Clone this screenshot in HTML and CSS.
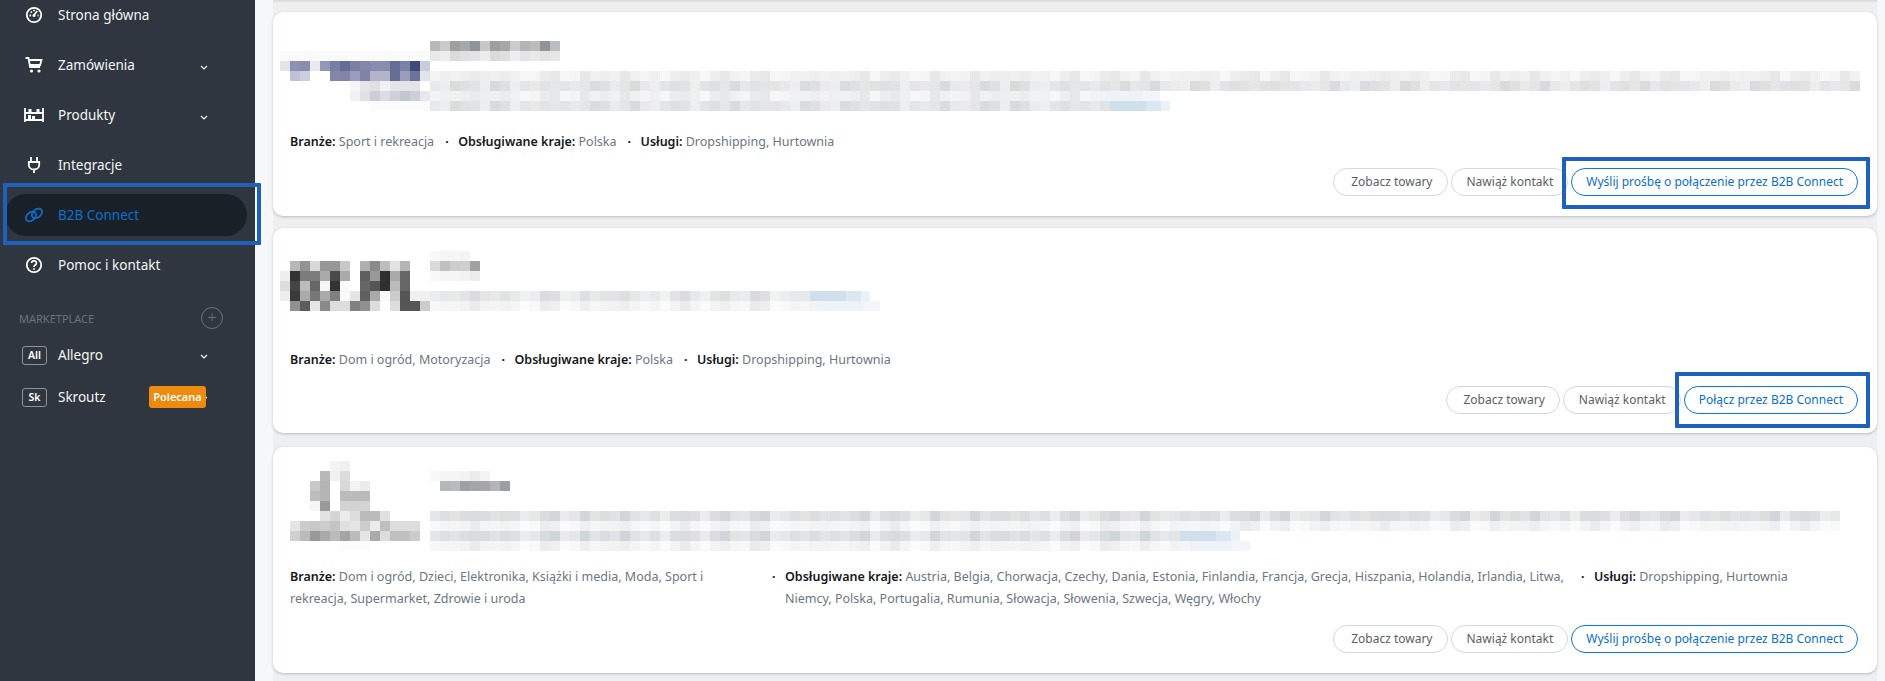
FILE: index.html
```html
<!DOCTYPE html>
<html lang="pl">
<head>
<meta charset="utf-8">
<title>B2B Connect</title>
<link rel="stylesheet" href="styles.css">
</head>
<body>
<div class="app">
  <aside class="sidebar">
    <nav class="menu">
      <a class="item"><svg class="ico" viewBox="0 0 18 18"><circle cx="9" cy="9" r="7.2"/><path d="M9 9l3.2-4M4.5 9.5h1.6M5.8 5.6l1 1M9 3.8v1.4M12.6 9.5h1"/><circle class="dot" cx="9" cy="9.4" r="1.5"/></svg><span class="label">Strona główna</span></a>
      <a class="item"><svg class="ico" viewBox="0 0 18 18"><path d="M0.5 2h3l1.6 9h10M4 4h12.5l-1.4 5H5"/><circle class="dot" cx="6.5" cy="15" r="1.6"/><circle class="dot" cx="14" cy="15" r="1.6"/></svg><span class="label">Zamówienia</span><svg class="chev" viewBox="0 0 8 5"><path d="M1 1l3 3 3-3"/></svg></a>
      <a class="item"><svg class="ico ico-wide" viewBox="0 0 20 18"><path d="M1 2v14M19 2v14M1 14h18M1 7h18"/><path class="fill" d="M4.500 3h3v4h-3zM12.500 3h3v4h-3zM4 9h3v4H4zM8 10h3v3H8z"/></svg><span class="label">Produkty</span><svg class="chev" viewBox="0 0 8 5"><path d="M1 1l3 3 3-3"/></svg></a>
      <a class="item"><svg class="ico" viewBox="0 0 18 18"><path d="M6 1v5M12 1v5M3.800 6h10.400v3a5.200 4.500 0 0 1-10.400 0zM9 13.500V17"/></svg><span class="label">Integracje</span></a>
      <a class="item item-active"><span class="pill"><svg class="ico ico-link" viewBox="0 0 20 18"><ellipse cx="7" cy="10.500" rx="5.800" ry="4" transform="rotate(-40 7 10.500)"/><ellipse cx="13" cy="7.500" rx="5.800" ry="4" transform="rotate(-40 13 7.500)"/></svg><span class="label">B2B Connect</span></span><span class="mark mark-side"></span></a>
      <a class="item"><svg class="ico" viewBox="0 0 18 18"><circle cx="9" cy="9" r="7.200"/><path d="M6.600 7a2.400 2.300 0 1 1 3.700 2c-.9.600-1.300 1-1.300 2"/><circle class="dot" cx="9" cy="13" r=".9"/></svg><span class="label">Pomoc i kontakt</span></a>
    </nav>
    <div class="section"><span class="section-name">MARKETPLACE</span><span class="add">+</span></div>
    <a class="market"><span class="tag">All</span><span class="label">Allegro</span><svg class="chev" viewBox="0 0 8 5"><path d="M1 1l3 3 3-3"/></svg></a>
    <a class="market"><span class="tag">Sk</span><span class="label">Skroutz</span><span class="badge">Polecana</span><svg class="chev chev-hidden" viewBox="0 0 8 5"><path d="M1 1l3 3 3-3"/></svg></a>
  </aside>

  <main class="cards">
    <article class="card card-a">
      <div class="head">
        <svg class="logo" width="150" height="70" viewBox="0 0 150 70">
          <g fill="#fafafa"><rect y="10" width="150" height="10"/></g>
          <rect x="0" y="20" width="10" height="10" fill="#e3e3ec"/><rect x="10" y="20" width="10" height="10" fill="#8f91b3"/><rect x="20" y="20" width="10" height="10" fill="#8a8dae"/><rect x="30" y="20" width="10" height="10" fill="#e8e8ef"/><rect x="40" y="20" width="10" height="10" fill="#9597b8"/><rect x="50" y="20" width="10" height="10" fill="#7b7ea3"/><rect x="60" y="20" width="10" height="10" fill="#666d94"/><rect x="70" y="20" width="10" height="10" fill="#7a7fa3"/><rect x="80" y="20" width="10" height="10" fill="#8487a9"/><rect x="90" y="20" width="10" height="10" fill="#898cae"/><rect x="100" y="20" width="10" height="10" fill="#8a8cad"/><rect x="110" y="20" width="10" height="10" fill="#666d94"/><rect x="120" y="20" width="10" height="10" fill="#7c80a4"/><rect x="130" y="20" width="10" height="10" fill="#404a78"/><rect x="140" y="20" width="10" height="10" fill="#cacbdb"/>
          <rect x="10" y="30" width="10" height="10" fill="#c0c1d4"/><rect x="20" y="30" width="10" height="10" fill="#cccddd"/><rect x="50" y="30" width="10" height="10" fill="#8386a9"/><rect x="60" y="30" width="10" height="10" fill="#8184a8"/><rect x="70" y="30" width="10" height="10" fill="#9b9cbc"/><rect x="80" y="30" width="10" height="10" fill="#7f83a7"/><rect x="90" y="30" width="20" height="10" fill="#b3b4cb"/><rect x="110" y="30" width="10" height="10" fill="#666d94"/><rect x="120" y="30" width="10" height="10" fill="#9a9cbb"/><rect x="130" y="30" width="10" height="10" fill="#6d7299"/><rect x="140" y="30" width="10" height="10" fill="#e2e3eb"/>
          <rect x="70" y="40" width="10" height="10" fill="#f6f6f8"/><rect x="80" y="40" width="10" height="10" fill="#e5e5ea"/><rect x="90" y="40" width="10" height="10" fill="#dfdfe5"/><rect x="100" y="40" width="10" height="10" fill="#f1f1f4"/><rect x="110" y="40" width="30" height="10" fill="#e3e3e8"/>
          <rect x="70" y="50" width="10" height="10" fill="#f2f2f5"/><rect x="80" y="50" width="10" height="10" fill="#e0e0e5"/><rect x="90" y="50" width="10" height="10" fill="#ccced6"/><rect x="100" y="50" width="10" height="10" fill="#dcdce2"/><rect x="110" y="50" width="10" height="10" fill="#ced0d8"/><rect x="120" y="50" width="10" height="10" fill="#c3c5d0"/><rect x="130" y="50" width="10" height="10" fill="#cdcfd8"/><rect x="140" y="50" width="10" height="10" fill="#e8e8ec"/>
          <rect x="90" y="60" width="60" height="10" fill="#fbfbfb"/>
        </svg>
        <div class="blur">
          <div class="line tone-dark w-130"></div>
          <div class="line tone-mid w-130"></div>
          <div class="line tone-light w-full gap-10"></div>
          <div class="line tone-mid w-full"></div>
          <div class="line tone-light w-730"><span class="tail tail-faint"></span></div>
          <div class="line tone-mid w-740"><span class="tail"></span></div>
        </div>
      </div>
      <div class="facts">
        <div class="fact"><b>Branże:</b> Sport i rekreacja</div>
        <div class="fact"><b>Obsługiwane kraje:</b> Polska</div>
        <div class="fact"><b>Usługi:</b> Dropshipping, Hurtownia</div>
      </div>
      <div class="actions">
        <a class="btn btn-view">Zobacz towary</a>
        <a class="btn">Nawiąż kontakt</a>
        <a class="btn btn-primary">Wyślij prośbę o połączenie przez B2B Connect<span class="mark mark-a"></span></a>
      </div>
    </article>

    <article class="card card-b">
      <div class="head">
        <svg class="logo" width="150" height="70" viewBox="0 0 150 70">
          <rect x="10" y="10" width="10" height="10" fill="#b8b8b8"/><rect x="20" y="10" width="10" height="10" fill="#939393"/><rect x="30" y="10" width="10" height="10" fill="#d8d8d8"/><rect x="40" y="10" width="20" height="10" fill="#979797"/><rect x="60" y="10" width="10" height="10" fill="#c8c8c8"/><rect x="80" y="10" width="10" height="10" fill="#b0b0b0"/><rect x="90" y="10" width="10" height="10" fill="#8a8a8a"/><rect x="100" y="10" width="10" height="10" fill="#bdbdbd"/><rect x="110" y="10" width="10" height="10" fill="#e2e2e2"/><rect x="120" y="10" width="10" height="10" fill="#b5b5b5"/>
          <rect x="0" y="20" width="10" height="10" fill="#eeeeee"/><rect x="10" y="20" width="10" height="10" fill="#333333"/><rect x="20" y="20" width="20" height="10" fill="#7c7c7c"/><rect x="40" y="20" width="10" height="10" fill="#aaaaaa"/><rect x="50" y="20" width="10" height="10" fill="#4a4a4a"/><rect x="60" y="20" width="10" height="10" fill="#aaaaaa"/><rect x="80" y="20" width="10" height="10" fill="#5f5f5f"/><rect x="90" y="20" width="10" height="10" fill="#999999"/><rect x="100" y="20" width="10" height="10" fill="#2f2f2f"/><rect x="110" y="20" width="10" height="10" fill="#aaaaaa"/><rect x="120" y="20" width="10" height="10" fill="#666666"/>
          <rect x="0" y="30" width="10" height="10" fill="#dddddd"/><rect x="10" y="30" width="10" height="10" fill="#444444"/><rect x="20" y="30" width="10" height="10" fill="#bbbbbb"/><rect x="30" y="30" width="10" height="10" fill="#666666"/><rect x="40" y="30" width="10" height="10" fill="#f5f5f5"/><rect x="50" y="30" width="10" height="10" fill="#333333"/><rect x="60" y="30" width="10" height="10" fill="#fafafa"/><rect x="80" y="30" width="10" height="10" fill="#666666"/><rect x="90" y="30" width="10" height="10" fill="#555555"/><rect x="100" y="30" width="10" height="10" fill="#2f2f2f"/><rect x="110" y="30" width="10" height="10" fill="#bbbbbb"/><rect x="120" y="30" width="10" height="10" fill="#666666"/>
          <rect x="0" y="40" width="10" height="10" fill="#eeeeee"/><rect x="10" y="40" width="10" height="10" fill="#3a3a3a"/><rect x="20" y="40" width="10" height="10" fill="#aaaaaa"/><rect x="30" y="40" width="10" height="10" fill="#777777"/><rect x="40" y="40" width="10" height="10" fill="#aaaaaa"/><rect x="50" y="40" width="10" height="10" fill="#808080"/><rect x="60" y="40" width="10" height="10" fill="#fafafa"/><rect x="70" y="40" width="10" height="10" fill="#e5e5e5"/><rect x="80" y="40" width="10" height="10" fill="#5f5f5f"/><rect x="90" y="40" width="10" height="10" fill="#aaaaaa"/><rect x="100" y="40" width="10" height="10" fill="#fafafa"/><rect x="110" y="40" width="10" height="10" fill="#cccccc"/><rect x="120" y="40" width="10" height="10" fill="#555555"/><rect x="130" y="40" width="20" height="10" fill="#f0f0f0"/>
          <rect x="10" y="50" width="10" height="10" fill="#919191"/><rect x="20" y="50" width="10" height="10" fill="#5c5c5c"/><rect x="30" y="50" width="10" height="10" fill="#e5e5e5"/><rect x="40" y="50" width="10" height="10" fill="#8a8a8a"/><rect x="50" y="50" width="20" height="10" fill="#dddddd"/><rect x="70" y="50" width="10" height="10" fill="#808080"/><rect x="80" y="50" width="10" height="10" fill="#919191"/><rect x="90" y="50" width="10" height="10" fill="#dddddd"/><rect x="110" y="50" width="10" height="10" fill="#dddddd"/><rect x="120" y="50" width="20" height="10" fill="#555555"/><rect x="140" y="50" width="10" height="10" fill="#cccccc"/>
        </svg>
        <div class="blur">
          <div class="line tone-faint w-40"></div>
          <div class="line tone-title w-50"></div>
          <div class="line tone-faint w-50"></div>
          <div class="line tone-light-2 w-440 gap-10"><span class="tail"></span></div>
          <div class="line tone-faint w-450"><span class="tail tail-faint"></span></div>
        </div>
      </div>
      <div class="facts">
        <div class="fact"><b>Branże:</b> Dom i ogród, Motoryzacja</div>
        <div class="fact"><b>Obsługiwane kraje:</b> Polska</div>
        <div class="fact"><b>Usługi:</b> Dropshipping, Hurtownia</div>
      </div>
      <div class="actions">
        <a class="btn btn-view">Zobacz towary</a>
        <a class="btn">Nawiąż kontakt</a>
        <a class="btn btn-primary">Połącz przez B2B Connect<span class="mark mark-b"></span></a>
      </div>
    </article>

    <article class="card card-c">
      <div class="head">
        <svg class="logo" width="150" height="100" viewBox="0 0 150 100">
          <rect x="50" y="0" width="10" height="10" fill="#f3f3f3"/><rect x="60" y="0" width="10" height="10" fill="#f0f0f0"/>
          <rect x="40" y="10" width="10" height="10" fill="#b8b8b8"/><rect x="50" y="10" width="10" height="10" fill="#f0f0f0"/><rect x="60" y="10" width="10" height="10" fill="#dcdcdc"/>
          <rect x="30" y="20" width="10" height="10" fill="#c8c8c8"/><rect x="40" y="20" width="10" height="10" fill="#b5b5b5"/><rect x="60" y="20" width="10" height="10" fill="#d8d8d8"/><rect x="70" y="20" width="10" height="10" fill="#f3f3f3"/><rect x="80" y="20" width="10" height="10" fill="#ececec"/>
          <rect x="30" y="30" width="10" height="10" fill="#bdbdbd"/><rect x="40" y="30" width="10" height="10" fill="#b5b5b5"/><rect x="60" y="30" width="30" height="10" fill="#bbbbbb"/>
          <rect x="30" y="40" width="10" height="10" fill="#f5f5f5"/><rect x="40" y="40" width="10" height="10" fill="#999999"/><rect x="60" y="40" width="30" height="10" fill="#d3d3d3"/>
          <rect x="40" y="50" width="10" height="10" fill="#e2e2e2"/><rect x="50" y="50" width="10" height="10" fill="#d5d5d5"/><rect x="60" y="50" width="10" height="10" fill="#ececec"/><rect x="70" y="50" width="10" height="10" fill="#dddddd"/><rect x="80" y="50" width="20" height="10" fill="#bbbbbb"/><rect x="100" y="50" width="10" height="10" fill="#e0e0e0"/>
          <rect x="10" y="60" width="10" height="10" fill="#e5e5e5"/><rect x="20" y="60" width="10" height="10" fill="#cccccc"/><rect x="30" y="60" width="10" height="10" fill="#c8c8c8"/><rect x="40" y="60" width="10" height="10" fill="#cccccc"/><rect x="50" y="60" width="10" height="10" fill="#c5c5c5"/><rect x="60" y="60" width="10" height="10" fill="#e0e0e0"/><rect x="70" y="60" width="10" height="10" fill="#e5e5e5"/><rect x="80" y="60" width="10" height="10" fill="#cccccc"/><rect x="90" y="60" width="10" height="10" fill="#ececec"/><rect x="100" y="60" width="10" height="10" fill="#c0c0c0"/><rect x="110" y="60" width="30" height="10" fill="#dddddd"/>
          <rect x="10" y="70" width="10" height="10" fill="#d0d0d0"/><rect x="20" y="70" width="10" height="10" fill="#bbbbbb"/><rect x="30" y="70" width="10" height="10" fill="#999999"/><rect x="40" y="70" width="10" height="10" fill="#aaaaaa"/><rect x="50" y="70" width="10" height="10" fill="#bbbbbb"/><rect x="60" y="70" width="10" height="10" fill="#a5a5a5"/><rect x="70" y="70" width="10" height="10" fill="#bbbbbb"/><rect x="80" y="70" width="10" height="10" fill="#e5e5e5"/><rect x="90" y="70" width="10" height="10" fill="#aaaaaa"/><rect x="100" y="70" width="10" height="10" fill="#dddddd"/><rect x="110" y="70" width="20" height="10" fill="#c0c0c0"/><rect x="130" y="70" width="10" height="10" fill="#cccccc"/>
          <rect x="60" y="80" width="30" height="10" fill="#fbfbfb"/>
        </svg>
        <div class="blur">
          <div class="line tone-faint w-60"></div>
          <div class="line tone-title-2 w-70 indent-10"></div>
          <div class="line tone-mid-2 w-1410 gap-20"></div>
          <div class="line tone-faint w-1410"></div>
          <div class="line tone-mid-2 w-810"><span class="tail"></span></div>
          <div class="line tone-faint w-820"><span class="tail tail-faint"></span></div>
        </div>
      </div>
      <div class="facts">
        <div class="fact fact-first"><b>Branże:</b> Dom i ogród, Dzieci, Elektronika, Książki i media, Moda, Sport i rekreacja, Supermarket, Zdrowie i uroda</div>
        <div class="fact fact-second"><b>Obsługiwane kraje:</b> Austria, Belgia, Chorwacja, Czechy, Dania, Estonia, Finlandia, Francja, Grecja, Hiszpania, Holandia, Irlandia, Litwa, Niemcy, Polska, Portugalia, Rumunia, Słowacja, Słowenia, Szwecja, Węgry, Włochy</div>
        <div class="fact"><b>Usługi:</b> Dropshipping, Hurtownia</div>
      </div>
      <div class="actions">
        <a class="btn btn-view">Zobacz towary</a>
        <a class="btn">Nawiąż kontakt</a>
        <a class="btn btn-primary">Wyślij prośbę o połączenie przez B2B Connect</a>
      </div>
    </article>
  </main>
</div>
</body>
</html>
```

FILE: styles.css
```css
* { box-sizing: border-box; }
html, body { margin: 0; height: 681px; overflow: hidden; }
body { font-family: "Noto Sans", "Open Sans", sans-serif; background: #f6f7f9; }

.app { display: flex; height: 681px; overflow: hidden; }

/* Sidebar */
.sidebar { width: 255px; flex: none; background: #2f363f; color: #fff; position: relative; z-index: 2; }
.menu { margin-top: -10px; }
.item { display: flex; align-items: center; height: 50px; padding-left: 25px; position: relative; font-size: 13.500px; color: #f4f5f6; }
.ico { width: 18px; height: 18px; flex: none; fill: none; stroke: #fff; stroke-width: 1.8; }
.ico .dot { fill: #fff; stroke: none; }
.ico .fill { fill: #fff; stroke: none; }
.ico-wide { width: 20px; margin-left: -1px; margin-right: -1px; }
.ico-link { width: 20px; stroke: #0a6fd0; stroke-width: 1.7; margin-left: -1px; margin-right: -1px; }
.label { margin-left: 15px; white-space: nowrap; }
.chev { width: 8px; height: 5px; fill: none; stroke: #fff; stroke-width: 1.1; position: absolute; left: 200px; top: 25px; }
.item-active { padding-left: 5px; }
.pill { display: flex; align-items: center; width: 242px; height: 42px; padding-left: 20px; border-radius: 21px; background: #1a2027; color: #0a6fd0; }
.mark { position: absolute; border: 4px solid #2060bd; border-radius: 1px; pointer-events: none; }
.mark-side { left: 3px; top: -7px; width: 258px; height: 62px; z-index: 3; }

.section { display: flex; align-items: center; justify-content: space-between; height: 32px; margin-top: 12px; padding: 0 32px 0 19px; }
.section-name { font-size: 11px; color: #68737d; }
.add { width: 22px; height: 22px; border: 1.5px solid #68737d; border-radius: 50%; color: #68737d; font-size: 17px; line-height: 17px; text-align: center; font-weight: 300; }
.market { display: flex; align-items: center; height: 42px; padding-left: 22px; position: relative; font-size: 13.500px; color: #f4f5f6; }
.market .label { margin-left: 11px; }
.market .chev { top: 20px; }
.market .chev-hidden { z-index: 0; left: 200px; }
.tag { width: 25px; height: 19px; border: 1px solid #8a929a; border-radius: 3px; font-size: 10.500px; font-weight: 600; line-height: 17px; text-align: center; color: #fff; }
.badge { position: absolute; left: 149px; top: 10px; width: 57px; height: 22px; background: #ee8a0e; border-radius: 3px; font-size: 11px; font-weight: 600; line-height: 22px; text-align: center; color: #fff; z-index: 1; }

/* Cards */
.cards { margin-left: 18px; width: 1604px; height: 681px; background: #eeeff1; padding-top: 12px; display: flex; flex-direction: column; flex: none; box-shadow: inset 0 3px 3px -2px rgba(0,0,0,.12); }
.card { width: 100%; background: #fff; border-radius: 10px; box-shadow: 0 1px 3px rgba(0,0,0,.22); padding: 0 17px; flex: none; }
.card-a { height: 204px; margin-bottom: 12px; }
.card-b { height: 205px; margin-bottom: 14px; }
.card-c { height: 226px; }

.head { display: flex; align-items: flex-start; margin-left: -10px; height: 119px; }
.card-a .head { padding-top: 29px; }
.card-b .head { height: 121px; padding-top: 23px; }
.card-c .head { height: 119px; padding-top: 14px; }
.logo { flex: none; display: block; }
.blur { flex: 1; min-width: 0; }
.card-c .blur { padding-top: 10px; }
.line { height: 10px; display: flex; justify-content: flex-end;
  background-size: 130px 10px, 70px 10px;
  background-image: linear-gradient(90deg, rgba(255,255,255,.18) 0 20px, rgba(0,0,0,.015) 20px 50px, rgba(255,255,255,.12) 50px 60px, rgba(0,0,0,.02) 60px 80px, rgba(255,255,255,.2) 80px 110px, rgba(0,0,0,.015) 110px 130px),
    linear-gradient(90deg, var(--a) 0 10px, var(--b) 10px 20px, var(--c) 20px 30px, var(--a) 30px 40px, var(--d) 40px 50px, var(--b) 50px 60px, var(--c) 60px 70px); }
.w-40 { width: 40px; } .w-50 { width: 50px; } .w-60 { width: 60px; } .w-70 { width: 70px; } .w-130 { width: 130px; }
.w-440 { width: 440px; } .w-450 { width: 450px; } .w-730 { width: 730px; } .w-740 { width: 740px; }
.w-810 { width: 810px; } .w-820 { width: 820px; } .w-1410 { width: 1410px; } .w-full { width: 1430px; }
.gap-10 { margin-top: 10px; } .gap-20 { margin-top: 20px; }
.indent-10 { margin-left: 10px; }
.tone-dark { --a: #a8aaac; --b: #bec0c1; --c: #a0a2a4; --d: #939699; }
.tone-mid { --a: #e3e4e6; --b: #e9eaec; --c: #dcdee0; --d: #e6e7e9; }
.tone-light { --a: #f1f2f3; --b: #ebeced; --c: #f4f5f5; --d: #eeeff0; }
.tone-light-2 { --a: #e7e8ea; --b: #e2e3e6; --c: #eceded; --d: #dedfe2; }
.tone-mid-2 { --a: #dfe1e3; --b: #d5d8dc; --c: #e6e7e9; --d: #dcdee1; }
.tone-faint { --a: #f6f7f7; --b: #f2f3f4; --c: #fafafa; --d: #eff0f1; }
.tone-title { --a: #d2d2d2; --b: #b3b3b3; --c: #d0d0d0; --d: #a3a3a3; }
.tone-title-2 { --a: #a5a8aa; --b: #a9abad; --c: #9fa3a7; --d: #a8aaad; }
.tail { width: 60px; height: 10px; background: linear-gradient(90deg, #cfdfec 0 60%, #dbe7f1 60% 85%, #eaf1f7 85%); }
.tail-faint { background: linear-gradient(90deg, #eef3f9 0 70%, #f2f6fb 70%); }

.facts { display: flex; align-items: flex-start; font-size: 12.500px; line-height: 22px; color: #6c7684; }
.fact { white-space: nowrap; }
.fact b { font-weight: 600; color: #14181d; }
.fact + .fact { position: relative; margin-left: 24px; }
.fact + .fact::before { content: "·"; position: absolute; left: -13px; top: 0; color: #14181d; font-weight: 700; }
.fact-first { width: 471px; white-space: normal; flex: none; }
.fact-second { width: 785px; white-space: normal; flex: none; }

.actions { display: flex; justify-content: flex-end; gap: 3px; padding-right: 2px; }
.card-a .actions { margin-top: 15px; }
.card-b .actions { margin-top: 15px; }
.card-c .actions { margin-top: 15px; }
.btn { display: block; height: 28px; padding: 0 14px 0 15px; border: 1px solid #d5d8dc; border-radius: 14px; font-size: 12px; line-height: 26px; color: #5a6069; white-space: nowrap; background: #fff; position: relative; }
.btn-view { padding-left: 17px; }
.btn-primary { border-color: #0a78d6; color: #0a6fd0; padding-left: 14px; }
.mark-a { left: -10px; top: -12px; right: -13px; bottom: -14px; }
.mark-b { left: -10px; top: -15px; right: -13px; bottom: -15px; }
```
